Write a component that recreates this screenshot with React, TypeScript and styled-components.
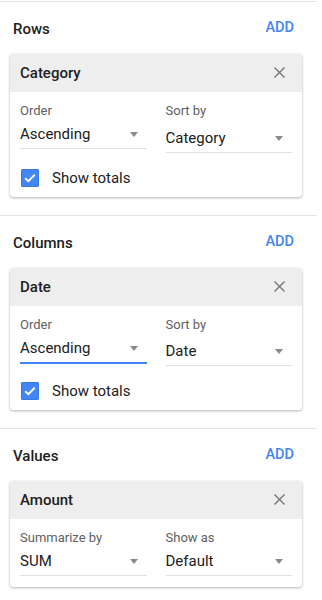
import * as React from 'react';
import styled, { createGlobalStyle } from 'styled-components';

const GlobalStyle = createGlobalStyle`
    body {
        margin: 0;
        background: #fff;
        font-family: Roboto, "Liberation Sans", Arial, sans-serif;
        color: #212121;
    }
`;

interface FieldDef {
    label: string;
    value: string;
    focused?: boolean;
    drop?: number;
}

interface GroupDef {
    title: string;
    card: string;
    fields: [FieldDef, FieldDef];
    totals?: boolean;
}

const groups: GroupDef[] = [
    {
        title: 'Rows',
        card: 'Category',
        fields: [
            { label: 'Order', value: 'Ascending' },
            { label: 'Sort by', value: 'Category', drop: 4 },
        ],
        totals: true,
    },
    {
        title: 'Columns',
        card: 'Date',
        fields: [
            { label: 'Order', value: 'Ascending', focused: true },
            { label: 'Sort by', value: 'Date', drop: 3 },
        ],
        totals: true,
    },
    {
        title: 'Values',
        card: 'Amount',
        fields: [
            { label: 'Summarize by', value: 'SUM' },
            { label: 'Show as', value: 'Default' },
        ],
    },
];

const CloseIcon = () => (
    <svg width="11" height="11" viewBox="0 0 11 11">
        <path d="M0.5 0.5 L10.5 10.5 M10.5 0.5 L0.5 10.5" stroke="#757575" strokeWidth="1.4" fill="none" />
    </svg>
);

const CheckIcon = () => (
    <svg width="12" height="10" viewBox="0 0 12 10">
        <path d="M1.2 5.2 L4.4 8.2 L10.8 1.6" stroke="#fff" strokeWidth="2" fill="none" />
    </svg>
);

const Select = ({ label, value, focused, drop = 0 }: FieldDef) => (
    <Field>
        <Label>{label}</Label>
        <Control $focused={focused} $drop={drop}>
            <Value>{value}</Value>
            <Arrow />
        </Control>
    </Field>
);

const App = () => (
    <>
        <GlobalStyle />
        <Panel>
            {groups.map((g) => (
                <Section key={g.title}>
                    <SectionHead>
                        <Title>{g.title}</Title>
                        <AddButton>ADD</AddButton>
                    </SectionHead>
                    <Card>
                        <CardHead>
                            <CardTitle>{g.card}</CardTitle>
                            <CloseButton><CloseIcon /></CloseButton>
                        </CardHead>
                        <CardBody $totals={!!g.totals}>
                            <Fields>
                                <Select {...g.fields[0]} />
                                <Select {...g.fields[1]} />
                            </Fields>
                            {g.totals && (
                                <CheckRow>
                                    <CheckBox><CheckIcon /></CheckBox>
                                    <CheckLabel>Show totals</CheckLabel>
                                </CheckRow>
                            )}
                        </CardBody>
                    </Card>
                </Section>
            ))}
        </Panel>
    </>
);

const Panel = styled.div`
    width: 317px;
    padding-top: 1px;
`;

const Section = styled.section`
    border-top: 1px solid #e3e3e3;
    padding: 17px 15px 18px 10px;
`;

const SectionHead = styled.div`
    display: flex;
    align-items: center;
    justify-content: space-between;
    height: 20px;
    padding: 0 8px 0 3px;
    margin-bottom: 15px;
`;

const Title = styled.h2`
    margin: 0;
    font-size: 15px;
    font-weight: 500;
    color: #212121;
`;

const AddButton = styled.span`
    font-size: 14.5px;
    font-weight: 500;
    color: #4285f4;
    margin-bottom: 4px;
`;

const Card = styled.div`
    background: #fff;
    border-radius: 3px;
    box-shadow: 0 1px 3px rgba(0, 0, 0, 0.28), 0 0 1px rgba(0, 0, 0, 0.12);
    overflow: hidden;
`;

const CardHead = styled.div`
    display: flex;
    align-items: center;
    justify-content: space-between;
    height: 38px;
    padding: 0 17px 0 10px;
    background: #eeeeee;
`;

const CardTitle = styled.span`
    font-size: 15px;
    font-weight: 500;
    color: #212121;
`;

const CloseButton = styled.span`
    display: flex;
    margin-top: -2px;
`;

const CardBody = styled.div<{ $totals: boolean }>`
    padding: 11px 10px ${(p) => (p.$totals ? '10px' : '11px')};
`;

const Fields = styled.div`
    display: grid;
    grid-template-columns: 1fr 1fr;
    column-gap: 19px;
    align-items: start;
`;

const Field = styled.div`
    display: flex;
    flex-direction: column;
`;

const Label = styled.span`
    font-size: 13px;
    line-height: 16px;
    color: #616161;
    margin-bottom: 1px;
`;

const Control = styled.div<{ $focused?: boolean; $drop: number }>`
    display: flex;
    align-items: center;
    justify-content: space-between;
    height: 28px;
    margin-top: ${(p) => p.$drop}px;
    padding-right: 9px;
    border-bottom: ${(p) => (p.$focused ? '2px solid #4285f4' : '1px solid #e0e0e0')};
    box-sizing: content-box;
    margin-bottom: ${(p) => (p.$focused ? '-1px' : '0')};
`;

const Value = styled.span`
    font-size: 15px;
    color: #212121;
`;

const Arrow = styled.span`
    width: 0;
    height: 0;
    border-left: 4.5px solid transparent;
    border-right: 4.5px solid transparent;
    border-top: 5px solid #8a8a8a;
`;

const CheckRow = styled.div`
    display: flex;
    align-items: center;
    gap: 13px;
    margin-top: 16px;
    padding-left: 1px;
`;

const CheckBox = styled.span`
    display: flex;
    align-items: center;
    justify-content: center;
    width: 18px;
    height: 18px;
    border-radius: 2px;
    background: #4285f4;
    box-shadow: inset 0 0 0 1px #3a77dc;
`;

const CheckLabel = styled.span`
    font-size: 15px;
    color: #212121;
`;

export default App;
